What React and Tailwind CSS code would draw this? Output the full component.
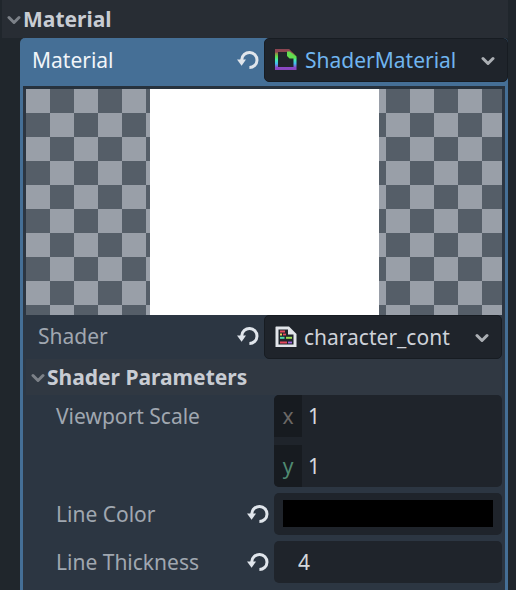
import { useState } from "react";

function Chevron({ className }) {
  return (
    <svg viewBox="0 0 14 12" className={`h-3 w-[14px] shrink-0 ${className}`} fill="none" stroke="currentColor" strokeWidth="3" strokeLinecap="round" strokeLinejoin="round" aria-hidden="true">
      <path d="M2 4.5 L7 9.5 L12 4.5" />
    </svg>
  );
}

function Revert({ label }) {
  return (
    <button type="button" aria-label={label} className="shrink-0 text-[#e0e5eb]">
      <svg viewBox="0 0 22 20" className="h-5 w-[22px]" aria-hidden="true">
        <path d="M4.8 11 V9.5 A7.6 7.6 0 1 1 12.4 17.6" fill="none" stroke="currentColor" strokeWidth="3" />
        <path d="M0 9.6 H9 L4.6 15.8 Z" fill="currentColor" />
      </svg>
    </button>
  );
}

function MaterialIcon() {
  return (
    <svg viewBox="0 0 22 22" className="h-[22px] w-[22px] shrink-0" aria-hidden="true">
      <defs>
        <linearGradient id="spectrum" x1="0" y1="0" x2="0" y2="22" gradientUnits="userSpaceOnUse">
          <stop offset="0" stopColor="#8c4551" />
          <stop offset="0.14" stopColor="#8c4551" />
          <stop offset="0.2" stopColor="#8f8a45" />
          <stop offset="0.34" stopColor="#5fe04b" />
          <stop offset="0.5" stopColor="#45ecb0" />
          <stop offset="0.66" stopColor="#43bdf0" />
          <stop offset="0.84" stopColor="#8a49c8" />
          <stop offset="1" stopColor="#8745b5" />
        </linearGradient>
      </defs>
      <path d="M1.5 1.5 H13.5 L20 8 V19.5 H1.5 Z" fill="none" stroke="url(#spectrum)" strokeWidth="3" />
      <path d="M12 2.5 H15 L21.5 9.5 H14.5 L12 7 Z" fill="#62dd50" />
    </svg>
  );
}

function ShaderIcon() {
  return (
    <svg viewBox="0 0 22 22" className="h-[22px] w-[22px] shrink-0" aria-hidden="true">
      <path d="M1 0.5 H14 L21.5 8 V21 H0.5 V1 Z" fill="#e2e5ea" />
      <path d="M3.5 3.5 H13 V8.5 H18.5 V18.5 H3.5 Z" fill="#20252c" />
      <path d="M5 5.5 H10 M5 16.5 H12" stroke="#e5485d" strokeWidth="1.8" />
      <path d="M5 8.5 H7" stroke="#e8d25a" strokeWidth="1.8" />
      <path d="M8 8.5 H11" stroke="#e5485d" strokeWidth="1.8" />
      <path d="M5 11.8 H9.5" stroke="#4fdcae" strokeWidth="2" />
      <path d="M11 11.8 H17" stroke="#9bdc4f" strokeWidth="2" />
      <path d="M13 16.5 H17" stroke="#9a62dd" strokeWidth="1.8" />
    </svg>
  );
}

function ResourceSelect({ id, icon, value, color, gap }) {
  return (
    <div className={`flex h-11 min-w-0 flex-1 items-center rounded-[5px] border border-[#171c22] bg-[#1f242b] pr-3 pl-[10px] ${gap}`}>
      {icon}
      <select id={id} defaultValue={value} className={`min-w-0 flex-1 appearance-none bg-transparent outline-none ${color}`}>
        <option>{value}</option>
      </select>
      <Chevron className="text-[#abafb4]" />
    </div>
  );
}

function Property({ id, label, revert, children }) {
  return (
    <div className="grid grid-cols-2">
      <div className="flex h-[42px] items-center justify-between pr-[5px]">
        <label htmlFor={id} className="text-[#a0a7b0]">{label}</label>
        {revert && <Revert label={`Revert ${label}`} />}
      </div>
      {children}
    </div>
  );
}

function Axis({ id, axis, color }) {
  return (
    <div className="flex h-[42px]">
      <label htmlFor={id} className={`flex w-7 items-center justify-center bg-[#171b20] ${color}`}>{axis}</label>
      <input id={id} type="text" defaultValue="1" className="min-w-0 flex-1 bg-transparent px-[6px] text-[#d5d8dc] outline-none" />
    </div>
  );
}

export default function App() {
  const [open, setOpen] = useState(true);
  const [paramsOpen, setParamsOpen] = useState(true);
  return (
    <main className="flex min-h-screen flex-col bg-[#20262c] pr-2 font-['Noto_Sans',sans-serif] text-[21px] leading-7">
      <button type="button" onClick={() => setOpen(!open)} className="ml-[2px] flex h-[38px] items-center gap-[2px] bg-[#282d34] pl-[5px] font-bold text-[#c8ccd3]">
        <Chevron className="text-[#7c8188]" />
        Material
      </button>
      {open && (
        <section className="ml-5 flex flex-1 flex-col rounded-t-[5px] border-x-[3px] border-[#456f96] bg-[#456f96]">
          <div className="-mx-[3px] grid h-12 grid-cols-2">
            <div className="flex h-11 items-center justify-between pr-[5px] pl-3">
              <label htmlFor="material" className="text-[#f1f5f9]">Material</label>
              <Revert label="Revert Material" />
            </div>
            <ResourceSelect id="material" icon={<MaterialIcon />} value="ShaderMaterial" color="text-[#70b5ef]" gap="gap-2" />
          </div>
          <div className="flex-1 border-t-[3px] border-[#27323d] bg-[#2c3642] px-[3px]">
            <div className="flex h-[226px] justify-center bg-[conic-gradient(#555e68_25%,#999fa8_0_50%,#555e68_0_75%,#999fa8_0)] bg-[length:48px_48px]">
              <div className="w-[229px] bg-white" />
            </div>
            <div className="[&>div>div:first-child]:pl-3">
              <Property id="shader" label="Shader" revert>
                <ResourceSelect id="shader" icon={<ShaderIcon />} value="character_cont" color="text-[#ced2d9]" gap="gap-[7px]" />
              </Property>
            </div>
            <button type="button" onClick={() => setParamsOpen(!paramsOpen)} className="flex h-9 w-full items-center gap-[2px] bg-[#303842] pl-[5px] font-bold text-[#c8ccd3]">
              <Chevron className="text-[#7c8188]" />
              Shader Parameters
            </button>
            {paramsOpen && (
              <div className="flex flex-col gap-[6px] pb-[6px] pl-5 [&>div>div:first-child]:pl-[10px]">
                <Property id="scale-x" label="Viewport Scale">
                  <div className="flex flex-col gap-2 overflow-hidden rounded-[5px] bg-[#1f242b]">
                    <Axis id="scale-x" axis="x" color="text-[#6c6866]" />
                    <Axis id="scale-y" axis="y" color="text-[#508a72]" />
                  </div>
                </Property>
                <Property id="line-color" label="Line Color" revert>
                  <div className="flex h-[42px] rounded-[5px] bg-[#1f242b] px-[9px] py-[7px]">
                    <input id="line-color" type="color" defaultValue="#000000" className="w-full appearance-none border-0 bg-black p-0 [&::-webkit-color-swatch]:border-0 [&::-webkit-color-swatch-wrapper]:p-0" />
                  </div>
                </Property>
                <Property id="thickness" label="Line Thickness" revert>
                  <input id="thickness" type="text" defaultValue="4" className="h-[42px] w-full min-w-0 rounded-[5px] bg-[#1f242b] px-6 text-[#d5d8dc] outline-none" />
                </Property>
              </div>
            )}
          </div>
        </section>
      )}
    </main>
  );
}
